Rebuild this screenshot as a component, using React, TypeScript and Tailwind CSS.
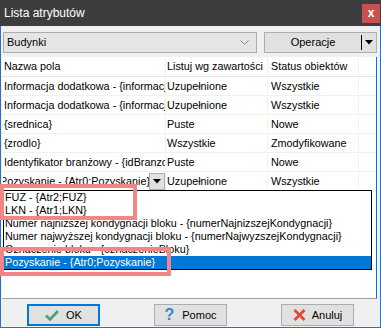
import React from "react";

const rows = [
  ["Informacja dodatkowa - {informacja}", "Uzupełnione", "Wszystkie"],
  ["Informacja dodatkowa - {informacja2}", "Uzupełnione", "Wszystkie"],
  ["{srednica}", "Puste", "Nowe"],
  ["{zrodlo}", "Wszystkie", "Zmodyfikowane"],
  ["Identyfikator branżowy - {idBranzowy}", "Puste", "Nowe"],
];

const options = [
  "FUZ - {Atr2;FUZ}",
  "LKN - {Atr1;LKN}",
  "Numer najniższej kondygnacji bloku - {numerNajnizszejKondygnacji}",
  "Numer najwyższej kondygnacji bloku - {numerNajwyzszejKondygnacji}",
  "Oznaczenie bloku - {oznaczenieBloku}",
  "Pozyskanie - {Atr0;Pozyskanie}",
];

function Cells({ a, b, c }: { a: React.ReactNode; b: string; c: string }) {
  return (
    <>
      <div className="w-[163px] shrink-0 overflow-hidden whitespace-nowrap border-r border-[#f0f0f0] pl-[1px]">{a}</div>
      <div className="w-[102px] shrink-0 overflow-hidden whitespace-nowrap border-r border-[#f0f0f0] pl-[1px]">{b}</div>
      <div className="w-[91px] shrink-0 overflow-hidden whitespace-nowrap border-r border-[#f0f0f0] pl-[3px]">{c}</div>
    </>
  );
}

export default function App() {
  return (
    <div className="relative h-[328px] w-[381px] overflow-hidden bg-[#f0f0f0] font-['Liberation_Sans',Arial,sans-serif] text-[10.8px] text-black">
      {/* title bar */}
      <div className="flex h-[26px] items-center justify-between bg-[#3d3d3d] pl-[4px] pr-[1px]">
        <span className="text-[12px] text-white">Lista atrybutów</span>
        <div className="flex h-[19px] w-[18px] items-center justify-center bg-[#c75050] text-[12px] font-bold leading-none text-white">x</div>
      </div>

      <div className="flex h-[302px] flex-col border-x border-b border-[#2f6fc0]">
        {/* toolbar */}
        <div className="flex h-[30px] items-center gap-[7px] pl-[2px] pt-[3px]">
          <div className="flex h-[21px] w-[254px] items-center justify-between border border-[#acacac] bg-[#e5e5e5] pl-[3px] pr-[7px]">
            <span className="text-[11px]">Budynki</span>
            <svg width="9" height="6" viewBox="0 0 9 6">
              <path d="M0.5 0.5 L4.5 4.5 L8.5 0.5" fill="none" stroke="#8a8a8a" strokeWidth="1" />
            </svg>
          </div>
          <div className="flex h-[21px] w-[113px] items-center border border-[#adadad] bg-[#e1e1e1]">
            <span className="flex-1 text-center text-[11px]">Operacje</span>
            <div className="h-[15px] w-[1px] bg-black" />
            <svg className="mx-[3px]" width="8" height="5" viewBox="0 0 8 5">
              <path d="M0 0 H8 L4 4.5 Z" fill="black" />
            </svg>
          </div>
        </div>

        {/* grid */}
        <div className="ml-[1px] mt-[1px] flex h-[242px] w-[375px] flex-col border-b border-r border-[#a0a0a0] border-r-[#0078d7] bg-white">
          <div className="flex h-[20px] items-center border-b border-[#e5e5e5] pl-[1px]">
            <Cells a="Nazwa pola" b="Listuj wg zawartości" c="Status obiektów" />
          </div>
          {rows.map((r, i) => (
            <div key={i} className="flex h-[19px] items-center border-b border-[#f0f0f0] pl-[1px]">
              <Cells a={r[0]} b={r[1]} c={r[2]} />
            </div>
          ))}
          <div className="flex h-[19px] items-center pl-[1px]">
            <div className="flex h-[19px] w-[163px] shrink-0 items-center overflow-hidden border-r border-[#f0f0f0]">
              <div className="w-[146px] overflow-hidden whitespace-nowrap">
                <span className="ml-[-3px] inline-block">Pozyskanie - {"{Atr0;Pozyskanie}"}</span>
              </div>
              <div className="flex h-[17px] w-[16px] items-center justify-center border border-[#adadad] bg-[#e1e1e1]">
                <svg width="8" height="5" viewBox="0 0 8 5">
                  <path d="M0 0 H8 L4 4.5 Z" fill="black" />
                </svg>
              </div>
            </div>
            <div className="w-[102px] shrink-0 overflow-hidden whitespace-nowrap border-r border-[#f0f0f0] pl-[1px]">Uzupełnione</div>
            <div className="w-[91px] shrink-0 overflow-hidden whitespace-nowrap border-r border-[#f0f0f0] pl-[3px]">Wszystkie</div>
          </div>
          <div className="flex-1" />
        </div>

        {/* footer */}
        <div className="flex flex-1 items-start gap-[54px] pl-[26px] pt-[5px] text-[11px]">
          <button className="flex h-[22px] w-[73px] items-center justify-center gap-[7px] border-2 border-[#0078d7] bg-[#e1e1e1]">
            <svg width="14" height="11" viewBox="0 0 14 11">
              <path d="M1 5.5 L5 9.5 L13 1" fill="none" stroke="#4e9e74" strokeWidth="2.6" />
            </svg>
            <span>OK</span>
          </button>
          <button className="flex h-[22px] w-[73px] items-center justify-center gap-[8px] border border-[#adadad] bg-[#e1e1e1]">
            <span className="text-[16px] font-bold leading-none text-[#3b82d0]">?</span>
            <span>Pomoc</span>
          </button>
          <button className="flex h-[22px] w-[73px] items-center justify-center gap-[6px] border border-[#adadad] bg-[#e1e1e1]">
            <svg width="13" height="12" viewBox="0 0 13 12">
              <path d="M1.5 1 L11.5 11 M11.5 1 L1.5 11" fill="none" stroke="#e2483a" strokeWidth="2.8" />
            </svg>
            <span>Anuluj</span>
          </button>
        </div>
      </div>

      {/* dropdown list popup */}
      <div className="absolute left-[3px] top-[190px] w-[369px] border border-black bg-white">
        {options.map((o, i) => (
          <div
            key={i}
            className={
              i === options.length - 1
                ? "h-[13px] whitespace-nowrap bg-[#0078d7] pl-[1px] leading-[13px] text-white"
                : "h-[13px] whitespace-nowrap pl-[1px] leading-[13px]"
            }
          >
            {o}
          </div>
        ))}
      </div>

      {/* annotation boxes */}
      <div className="absolute left-0 top-[184px] h-[36px] w-[137px] border-4 border-[#f28585]" />
      <div className="absolute left-0 top-[247px] h-[29px] w-[171px] border-4 border-[#f28585]" />
    </div>
  );
}
